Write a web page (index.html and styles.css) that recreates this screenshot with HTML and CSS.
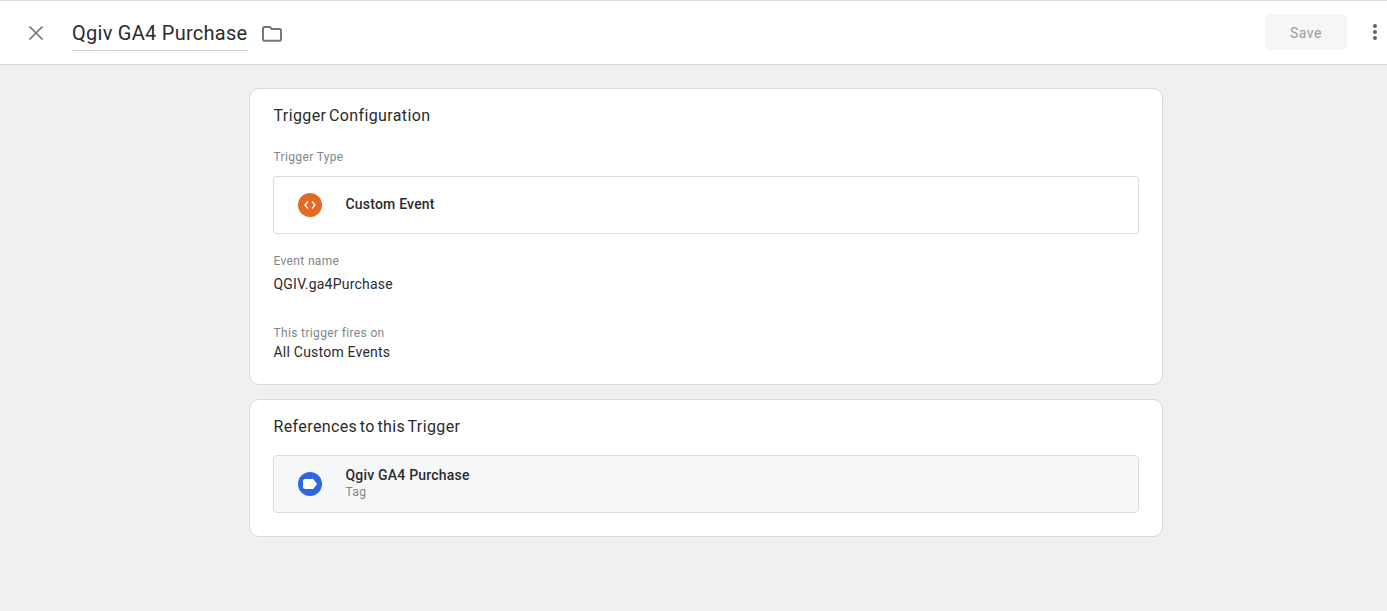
FILE: index.html
```html
<!DOCTYPE html>
<html lang="en">
<head>
  <meta charset="UTF-8">
  <title>Qgiv GA4 Purchase</title>
  <link rel="stylesheet" href="styles.css">
</head>
<body>
  <header class="topbar">
    <button class="icon-btn close-btn" aria-label="Close">
      <svg width="16" height="16" viewBox="0 0 16 16"><path d="M1.500 1.500l13 13M14.500 1.500l-13 13" stroke="#757575" stroke-width="1.700" fill="none"/></svg>
    </button>
    <div class="name">Qgiv GA4 Purchase</div>
    <svg class="folder" width="20" height="16" viewBox="0 0 20 16"><path d="M2.400 1h5.400l2 2.100h7.800c.8 0 1.400.6 1.400 1.400v8.900c0 .8-.6 1.400-1.400 1.400H2.400c-.8 0-1.400-.6-1.400-1.400V2.400C1 1.600 1.600 1 2.400 1z" fill="none" stroke="#757575" stroke-width="2"/></svg>
    <div class="spacer"></div>
    <button class="save-btn">Save</button>
    <div class="more" aria-label="More">
      <span></span><span></span><span></span>
    </div>
  </header>

  <main class="content">
    <section class="card">
      <h2 class="card-title">Trigger Configuration</h2>
      <div class="label type-label">Trigger Type</div>
      <div class="type-row">
        <span class="badge badge-orange">
          <svg width="12" height="10" viewBox="0 0 12 10"><path d="M4 1.500L1 5l3 3.500M8 1.500L11 5 8 8.500" fill="none" stroke="#fff" stroke-width="1.300"/></svg>
        </span>
        <div class="row-name">Custom Event</div>
      </div>
      <div class="label event-label">Event name</div>
      <div class="value event-value">QGIV.ga4Purchase</div>
      <div class="label fires-label">This trigger fires on</div>
      <div class="value fires-value">All Custom Events</div>
    </section>

    <section class="card refs">
      <h2 class="card-title">References to this Trigger</h2>
      <div class="type-row ref-row">
        <span class="badge badge-blue">
          <svg width="14" height="10" viewBox="0 0 14 10"><path d="M2 0h7.500c.5 0 .9.200 1.200.6L14 5l-3.300 4.400c-.3.400-.7.600-1.200.6H2c-1.100 0-2-.9-2-2V2C0 .9.900 0 2 0z" fill="#fff"/></svg>
        </span>
        <div>
          <div class="row-name">Qgiv GA4 Purchase</div>
          <div class="row-sub">Tag</div>
        </div>
      </div>
    </section>
  </main>
</body>
</html>
```

FILE: styles.css
```css
* {
  margin: 0;
  padding: 0;
  box-sizing: border-box;
}

body {
  font-family: Roboto, "Liberation Sans", sans-serif;
  background: #eff0f2;
  color: #202124;
  min-height: 100vh;
}

.topbar {
  height: 65px;
  background: #fff;
  border-top: 1px solid #dadce0;
  border-bottom: 1px solid #d4d5d7;
  display: flex;
  align-items: center;
}

.icon-btn {
  background: none;
  border: none;
  display: flex;
}

.close-btn {
  margin-left: 28px;
}

.name {
  margin-left: 28px;
  width: 176px;
  height: 36px;
  line-height: 37px;
  margin-top: 1px;
  font-size: 20px;
  letter-spacing: 0.27px;
  color: #2a2b2e;
  white-space: nowrap;
  border-bottom: 1px solid #d3d4d6;
}

.folder {
  margin-left: 14px;
  margin-top: 3px;
}

.spacer {
  flex: 1;
}

.save-btn {
  width: 82px;
  height: 36px;
  margin-top: -1px;
  padding-top: 2px;
  border: none;
  border-radius: 4px;
  background: #f6f6f6;
  color: #9c9d9f;
  font-family: inherit;
  font-size: 14px;
  font-weight: 400;
  letter-spacing: 0.5px;
}

.more {
  width: 40px;
  display: flex;
  flex-direction: column;
  align-items: center;
  gap: 2px;
  padding-left: 16px;
  margin-top: -1px;
}

.more span {
  width: 4px;
  height: 4px;
  border-radius: 50%;
  background: #5f6368;
}

.content {
  width: 914px;
  margin: 23px 0 0 249px;
}

.card {
  height: 297px;
  background: #fff;
  border: 1px solid #d8d9db;
  border-radius: 10px;
  padding: 0 23px;
}

.refs {
  height: 138px;
  margin-top: 14px;
}

.card-title {
  font-size: 16px;
  font-weight: 400;
  line-height: 20px;
  height: 37px;
  padding-top: 17px;
  margin-left: 0.5px;
  letter-spacing: 0.38px;
  word-spacing: -1.7px;
  color: #2a2b2e;
}

.label {
  font-size: 12px;
  line-height: 16px;
  margin-left: 0.5px;
  color: #80868b;
  letter-spacing: 0.35px;
}

.type-label {
  margin-top: 23px;
}

.type-row {
  height: 58px;
  margin-top: 11px;
  border: 1px solid #d8d9db;
  border-radius: 4px;
  display: flex;
  align-items: center;
  padding-left: 24px;
}

.ref-row {
  background: #f6f7f9;
  margin-top: 18px;
}

.badge {
  width: 24px;
  height: 24px;
  border-radius: 50%;
  display: flex;
  align-items: center;
  justify-content: center;
  margin-right: 24px;
  flex-shrink: 0;
}

.badge-orange {
  background: #e26a24;
}

.badge-blue {
  background: #2f66e0;
}

.row-name {
  font-size: 14px;
  font-weight: 500;
  line-height: 16px;
  letter-spacing: 0.2px;
  margin-left: -0.5px;
  margin-bottom: 2px;
  color: #2a2b2e;
}

.row-sub {
  font-size: 12px;
  line-height: 16px;
  margin: -1px 0 1px -0.5px;
  color: #80868b;
  letter-spacing: 0.3px;
}

.value {
  font-size: 14px;
  line-height: 20px;
  margin-left: 0.5px;
  letter-spacing: 0.22px;
  color: #2a2b2e;
}

.event-label {
  margin-top: 19px;
}

.event-value {
  margin-top: 5px;
}

.fires-label {
  margin-top: 31px;
}

.fires-value {
  margin-top: 1px;
}
```
